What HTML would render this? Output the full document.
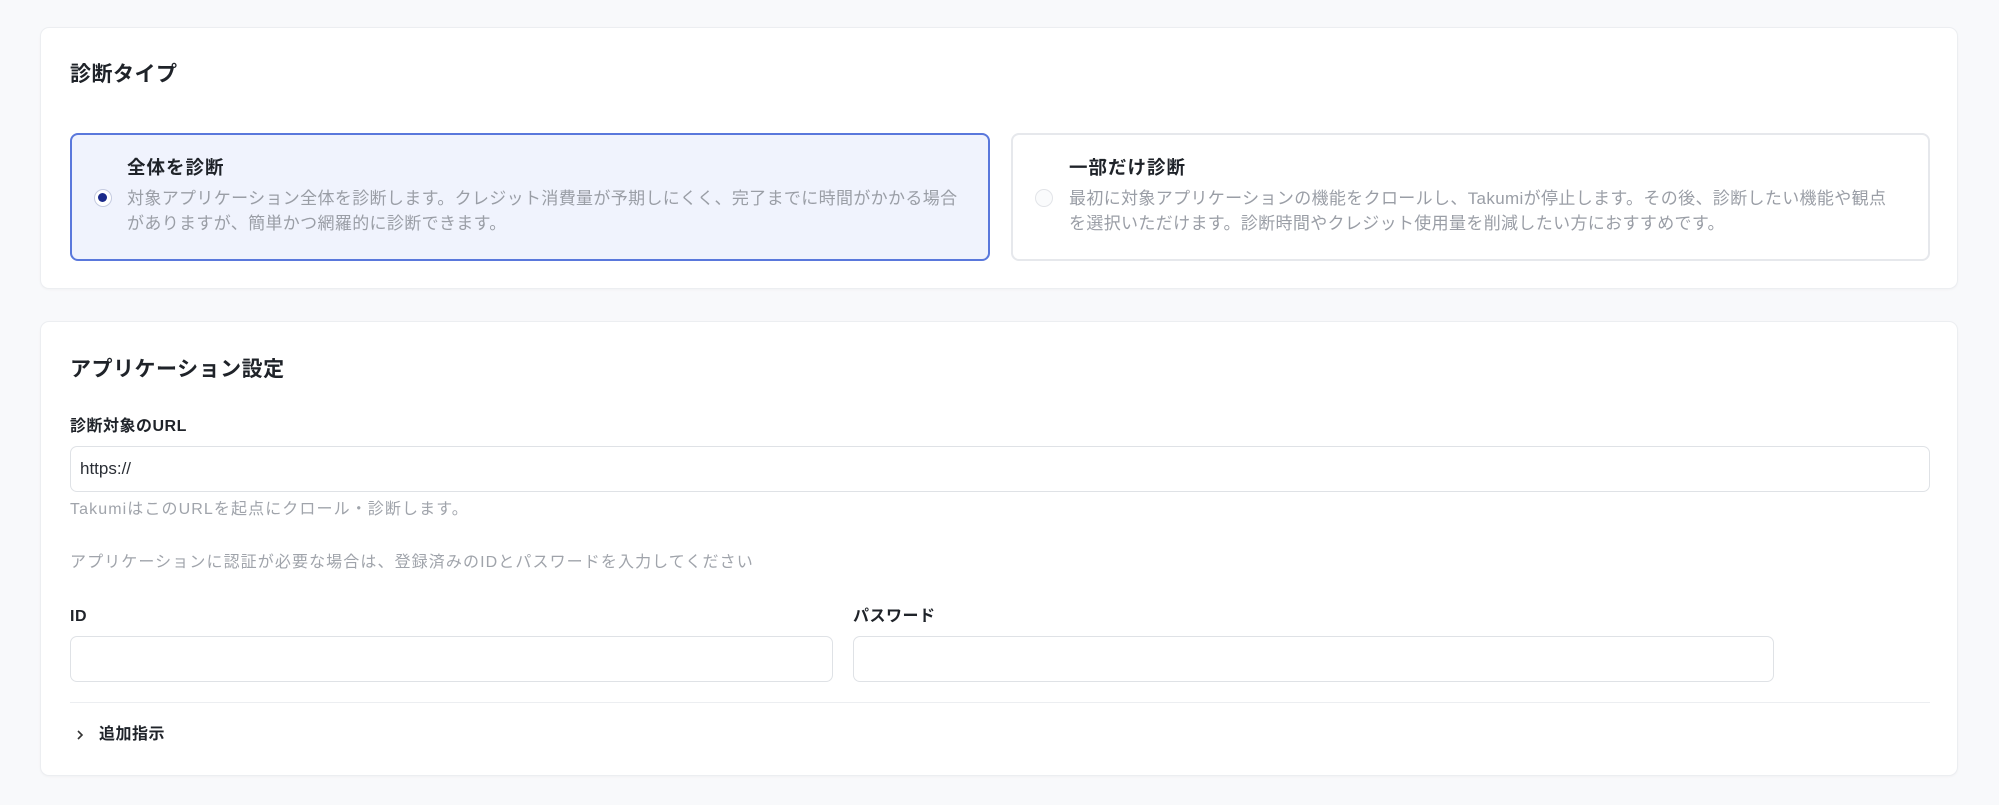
<!DOCTYPE html>
<html><head><meta charset="utf-8"><style>
*{box-sizing:border-box;margin:0;padding:0}
body{width:1999px;height:805px;background:#f8f9fb;font-family:"Liberation Sans","Noto Sans CJK JP",sans-serif;position:relative;overflow:hidden;color:#1f2329}
.card{position:absolute;left:40px;width:1918px;background:#fff;border:1px solid #eceef1;border-radius:9px;box-shadow:0 1px 2px rgba(0,0,0,.03)}
.abs{position:absolute;white-space:nowrap}
.h{font-size:21px;font-weight:700;letter-spacing:.5px;line-height:28px}
.opt{position:absolute;top:105px;height:128px;border-radius:8px}
.ot{font-size:18.5px;font-weight:700;letter-spacing:1px;line-height:26px}
.od{font-size:17px;letter-spacing:.35px;color:#9a9ea6;line-height:25px}
.lbl{font-size:16px;font-weight:700;letter-spacing:.5px;line-height:22px}
.inp{position:absolute;height:46px;border:1px solid #dfe2e6;border-radius:7px;background:#fff}
.help{font-size:16px;color:#a0a4ab;letter-spacing:1.1px;line-height:22px}
</style></head><body>
<div class="card" style="top:27px;height:262px">
  <div class="abs h" style="left:29px;top:33px">診断タイプ</div>
  <div class="opt" style="left:29px;width:920px;background:#f0f3fd;border:2px solid #5a78dc">
    <div class="abs ot" style="left:55px;top:20px">全体を診断</div>
    <div style="position:absolute;left:22px;top:54px;width:18px;height:18px;border-radius:50%;border:1.5px solid #c5cbe0;background:#fff"><div style="position:absolute;left:3px;top:3px;width:9px;height:9px;border-radius:50%;background:#1b2a8a"></div></div>
    <div class="abs od" style="left:55px;top:51px">対象アプリケーション全体を診断します。クレジット消費量が予期しにくく、完了までに時間がかかる場合<br>がありますが、簡単かつ網羅的に診断できます。</div>
  </div>
  <div class="opt" style="left:970px;width:919px;background:#fff;border:2px solid #e6e8ec">
    <div class="abs ot" style="left:56px;top:20px">一部だけ診断</div>
    <div style="position:absolute;left:22px;top:54px;width:18px;height:18px;border-radius:50%;border:1.5px solid #e2e4e8;background:#fafbfc"></div>
    <div class="abs od" style="left:56px;top:51px">最初に対象アプリケーションの機能をクロールし、Takumiが停止します。その後、診断したい機能や観点<br>を選択いただけます。診断時間やクレジット使用量を削減したい方におすすめです。</div>
  </div>
</div>
<div class="card" style="top:321px;height:455px">
  <div class="abs h" style="left:29px;top:34px">アプリケーション設定</div>
  <div class="abs lbl" style="left:29px;top:94px">診断対象のURL</div>
  <div class="inp" style="left:29px;top:124px;width:1860px"><span class="abs" style="left:9px;top:12px;font-size:17px;color:#2a2e35">https://</span></div>
  <div class="abs help" style="left:29px;top:177px">TakumiはこのURLを起点にクロール・診断します。</div>
  <div class="abs help" style="left:29px;top:230px">アプリケーションに認証が必要な場合は、登録済みのIDとパスワードを入力してください</div>
  <div class="abs lbl" style="left:29px;top:284px">ID</div>
  <div class="abs lbl" style="left:812px;top:284px">パスワード</div>
  <div class="inp" style="left:29px;top:314px;width:763px"></div>
  <div class="inp" style="left:812px;top:314px;width:921px"></div>
  <div style="position:absolute;left:29px;top:380px;width:1860px;height:1px;background:#eceef1"></div>
  <svg class="abs" style="left:33px;top:406px" width="12" height="14" viewBox="0 0 12 14"><path d="M4 3l4 4-4 4" fill="none" stroke="#333" stroke-width="1.6"/></svg>
  <div class="abs" style="left:58px;top:402px;font-size:16px;font-weight:700;letter-spacing:.5px;line-height:22px">追加指示</div>
</div>
</body></html>
